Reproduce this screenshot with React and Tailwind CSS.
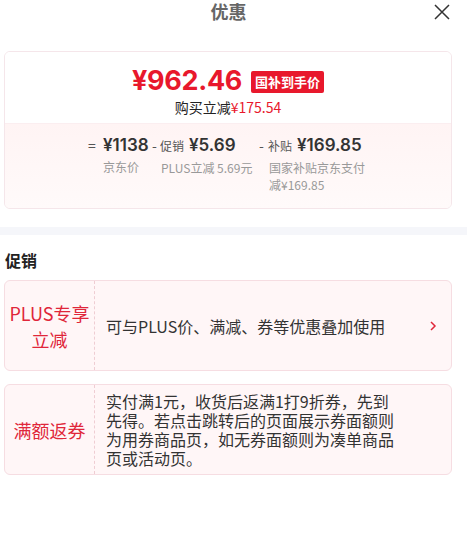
import React from "react";

const cjk = { fontFamily: '"Noto Sans CJK SC", "Noto Sans", sans-serif' };
const num = { fontFamily: 'Inter, "Noto Sans", sans-serif' };

export default function App() {
  return (
    <div
      className="w-[467px] h-[553px] bg-white relative overflow-hidden text-[#333]"
      style={cjk}
    >
      {/* header */}
      <div className="relative h-[22px] flex items-start justify-center pr-[10px] pt-[1px]">
        <div className="text-[18px] leading-[20px] font-bold text-[#666]">优惠</div>
        <svg
          className="absolute left-[434px] top-[4px]"
          width="16"
          height="16"
          viewBox="0 0 16 16"
          fill="none"
          stroke="#333"
          strokeWidth="1.5"
        >
          <path d="M1 1L15 15M15 1L1 15" />
        </svg>
      </div>

      {/* price card */}
      <div className="mt-[29px] ml-[4px] w-[448px] border border-[#f5e6ea] rounded-[6px] overflow-hidden">
        <div className="h-[71px] bg-white flex flex-col items-center pt-[14px]">
          <div className="flex items-center h-[30px]">
            <span
              className="text-[27px] leading-[30px] font-bold text-[#e8182c] tracking-[-0.3px]"
              style={num}
            >
              ¥962.46
            </span>
            <span className="ml-[9px] mt-[1px] bg-[#e8182c] text-white text-[13px] leading-[22px] font-bold px-[4px] rounded-[2px]">
              国补到手价
            </span>
          </div>
          <div className="text-[14px] leading-[20px] mt-[1px] text-[#222]">
            购买立减<span className="text-[#e8182c]">¥175.54</span>
          </div>
        </div>
        <div className="h-[85px] bg-gradient-to-b from-[#fff4f4] to-[#fffafa] border-t border-[#fbeef0] pl-[83px] pt-[9px] flex">
          {/* col1 */}
          <div className="flex w-[64px] shrink-0">
            <span className="w-[15px] text-[14px] leading-[24px] text-[#555]">=</span>
            <div className="flex flex-col">
              <span className="text-[17px] leading-[24px] font-semibold text-[#333]" style={num}>¥1138</span>
              <span className="text-[12px] leading-[17px] text-[#999] mt-[1px]">京东价</span>
            </div>
          </div>
          {/* col2 */}
          <div className="flex w-[107px] shrink-0">
            <span className="w-[8px] text-[14px] leading-[24px] text-[#555]">-</span>
            <div className="flex flex-col">
              <div className="flex items-baseline">
                <span className="text-[12px] leading-[24px] text-[#555]">促销</span>
                <span className="ml-[5px] text-[17px] leading-[24px] font-semibold text-[#333]" style={num}>¥5.69</span>
              </div>
              <span className="pl-[1px] text-[12px] leading-[17px] text-[#999] mt-[1px] whitespace-nowrap">PLUS立减 5.69元</span>
            </div>
          </div>
          {/* col3 */}
          <div className="flex w-[110px] shrink-0">
            <span className="w-[9px] text-[14px] leading-[24px] text-[#555]">-</span>
            <div className="flex flex-col w-[100px]">
              <div className="flex items-baseline">
                <span className="text-[12px] leading-[24px] text-[#555]">补贴</span>
                <span className="ml-[5px] text-[17px] leading-[24px] font-semibold text-[#333] whitespace-nowrap" style={num}>¥169.85</span>
              </div>
              <span className="pl-[1px] text-[12px] leading-[17px] text-[#999] mt-[1px]">国家补贴京东支付减¥169.85</span>
            </div>
          </div>
        </div>
      </div>

      {/* divider band */}
      <div className="mt-[18px] h-[8px] bg-[#f5f6fa]" />

      {/* promotions */}
      <div className="mt-[14px] pl-[5px] text-[16px] leading-[22px] font-bold text-[#222]">促销</div>

      <div className="mt-[9px] ml-[4px] w-[448px] h-[91px] flex bg-[#fff6f7] border border-[#f6dde2] rounded-[6px]">
        <div className="w-[90px] shrink-0 border-r border-dashed border-[#efcdd3] flex items-center justify-center text-center text-[18px] leading-[26px] text-[#e0263a]">
          PLUS专享
          <br />
          立减
        </div>
        <div className="flex-1 flex items-center pl-[11px] pr-[14px]">
          <span className="flex-1 text-[16px] leading-[22px] text-[#333]">可与PLUS价、满减、券等优惠叠加使用</span>
          <svg width="8" height="12" viewBox="0 0 8 12" fill="none" stroke="#e0263a" strokeWidth="1.5">
            <path d="M2 2L6 6L2 10" />
          </svg>
        </div>
      </div>

      <div className="mt-[13px] ml-[4px] w-[448px] h-[91px] flex bg-[#fff6f7] border border-[#f6dde2] rounded-[6px]">
        <div className="w-[90px] shrink-0 border-r border-dashed border-[#efcdd3] flex items-center justify-center text-[18px] leading-[26px] text-[#e0263a]">
          满额返券
        </div>
        <div className="flex-1 flex items-center pl-[11px]">
          <span className="whitespace-nowrap text-[16px] leading-[19px] text-[#333]">
            实付满1元，收货后返满1打9折券，先到
            <br />
            先得。若点击跳转后的页面展示券面额则
            <br />
            为用券商品页，如无券面额则为凑单商品
            <br />
            页或活动页。
          </span>
        </div>
      </div>
    </div>
  );
}
